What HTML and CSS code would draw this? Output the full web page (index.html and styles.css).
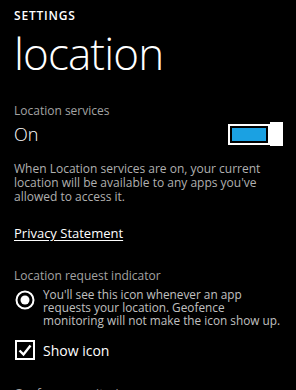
FILE: index.html
```html
<!DOCTYPE html>
<html>
<head>
<meta charset="utf-8">
<link rel="stylesheet" href="styles.css">
</head>
<body>
<div class="page">
  <div class="app-title">SETTINGS</div>
  <h1 class="page-title">location</h1>

  <div class="label">Location services</div>
  <div class="toggle-row">
    <span class="toggle-state">On</span>
    <span class="toggle">
      <span class="toggle-track"><span class="toggle-fill"></span></span>
      <span class="toggle-thumb"></span>
    </span>
  </div>
  <p class="desc">When Location services are on, your current location will be available to any apps you've allowed to access it.</p>

  <a class="link">Privacy Statement</a>

  <div class="label label-indicator">Location request indicator</div>
  <div class="radio-row">
    <svg class="radio" width="20" height="20" viewBox="0 0 20 20">
      <circle cx="10" cy="10" r="8.5" fill="none" stroke="#fff" stroke-width="2"/>
      <circle cx="10" cy="10" r="4.5" fill="#fff"/>
    </svg>
    <p class="radio-text">You'll see this icon whenever an app requests your location. Geofence monitoring will not make the icon show up.</p>
  </div>
  <div class="check-row">
    <svg class="check" width="20" height="20" viewBox="0 0 20 20">
      <rect x="1" y="1" width="18" height="18" fill="none" stroke="#fff" stroke-width="2"/>
      <path d="M4.5 10.5 L8.5 14.5 L15.5 5.5" fill="none" stroke="#fff" stroke-width="2.4"/>
    </svg>
    <span class="check-label">Show icon</span>
  </div>

  <div class="label label-next">Geofence monitoring</div>
</div>
</body>
</html>
```
FILE: styles.css
```css
html, body {
  margin: 0;
  padding: 0;
  background: #000;
}
body {
  font-family: "Open Sans", "Noto Sans", sans-serif;
  color: #fff;
  width: 296px;
  height: 390px;
  overflow: hidden;
}
.page {
  padding: 9px 0 0 14px;
}
.app-title {
  font-size: 12px;
  font-weight: 600;
  line-height: 14px;
  letter-spacing: 0.8px;
}
.page-title {
  margin: 0;
  font-size: 44px;
  font-weight: 300;
  line-height: 60px;
  letter-spacing: -0.9px;
}
.label {
  color: #a3a3a3;
  font-size: 12px;
  line-height: 16px;
}
.page-title + .label {
  margin-top: 20px;
}
.toggle-row {
  display: flex;
  align-items: center;
  justify-content: space-between;
  padding-right: 13px;
  height: 26px;
  margin-top: 2px;
}
.toggle-state {
  font-size: 18px;
  font-weight: 300;
}
.toggle {
  display: flex;
  align-items: center;
}
.toggle-track {
  width: 42px;
  height: 21px;
  box-sizing: border-box;
  border: 2px solid #fff;
  padding: 2px;
  display: flex;
}
.toggle-fill {
  flex: 1;
  background: #1ba1e2;
}
.toggle-thumb {
  width: 13px;
  height: 24px;
  background: #fff;
}
.desc {
  margin: 15px 14px 0 0;
  color: #b0b0b0;
  font-size: 12px;
  line-height: 14px;
}
.link {
  display: block;
  margin-top: 20px;
  font-size: 13px;
  line-height: 18px;
  text-decoration: underline;
  text-underline-offset: 2px;
  color: #fff;
}
.label-indicator {
  margin-top: 26px;
}
.radio-row {
  display: flex;
  gap: 8px;
  margin-top: 4px;
}
.radio {
  flex: none;
  margin: 2px 0 0 1px;
}
.radio-text {
  margin: 0;
  color: #c0c0c0;
  font-size: 11.8px;
  line-height: 13px;
  padding-right: 10px;
}
.check-row {
  display: flex;
  align-items: center;
  gap: 8px;
  margin-top: 13px;
}
.check {
  flex: none;
  margin-left: 1px;
}
.check-label {
  font-size: 14px;
}
.label-next {
  margin-top: 26px;
}
```
